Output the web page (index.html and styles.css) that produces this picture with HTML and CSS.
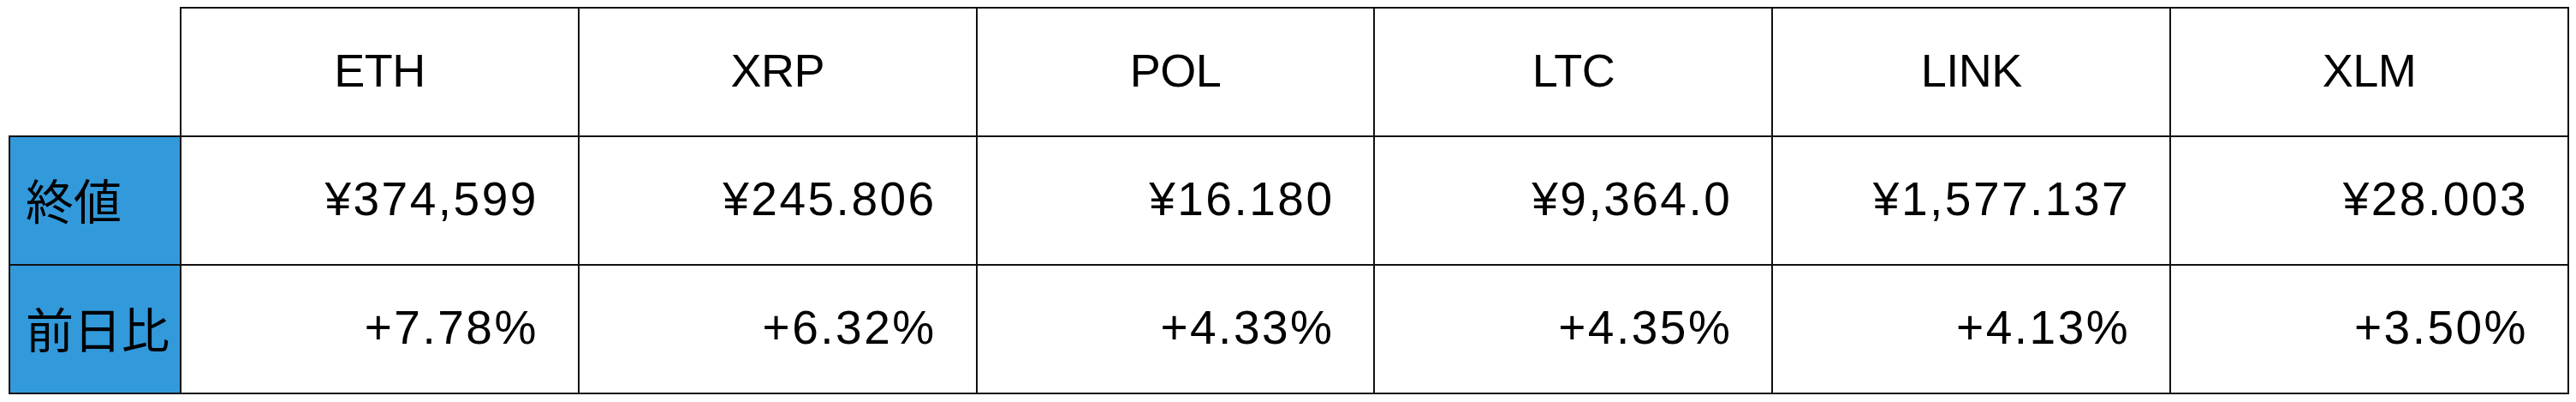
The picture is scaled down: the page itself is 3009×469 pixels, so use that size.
FILE: index.html
```html
<!DOCTYPE html>
<html lang="ja">
<head>
<meta charset="utf-8">
<link rel="stylesheet" href="styles.css">
</head>
<body>
<table class="quotes">
  <colgroup>
    <col class="label-col">
    <col><col><col><col><col><col>
  </colgroup>
  <tr class="head">
    <td class="corner"></td>
    <td>ETH</td><td>XRP</td><td>POL</td><td>LTC</td><td>LINK</td><td>XLM</td>
  </tr>
  <tr class="value">
    <th>終値</th>
    <td>¥374,599</td><td>¥245.806</td><td>¥16.180</td><td>¥9,364.0</td><td>¥1,577.137</td><td>¥28.003</td>
  </tr>
  <tr class="value">
    <th>前日比</th>
    <td>+7.78%</td><td>+6.32%</td><td>+4.33%</td><td>+4.35%</td><td>+4.13%</td><td>+3.50%</td>
  </tr>
</table>
</body>
</html>
```
FILE: styles.css
```css
html, body {
  margin: 0;
  padding: 0;
  background: #ffffff;
}
body {
  font-family: "Liberation Sans", "Noto Sans CJK JP", sans-serif;
  color: #000000;
}
.quotes {
  margin: 8px 0 0 10px;
  width: 2991px;
  border-collapse: collapse;
  table-layout: fixed;
  font-size: 54px;
}
.quotes .label-col {
  width: 200px;
}
.quotes tr {
  height: 150px;
}
.quotes td, .quotes th {
  border: 2px solid #111111;
  padding: 0 0 5px 0;
  font-weight: 400;
  white-space: nowrap;
}
.quotes th {
  text-align: left;
  background: #3299db;
  padding-left: 18px;
  font-size: 56px;
  font-family: "Noto Sans CJK JP", sans-serif;
}
.quotes .head td {
  text-align: center;
  letter-spacing: -0.5px;
}
.quotes .value td {
  text-align: right;
  padding-right: 46px;
  letter-spacing: 2.5px;
  font-size: 55px;
}
.quotes td.corner {
  border: none;
}
```
